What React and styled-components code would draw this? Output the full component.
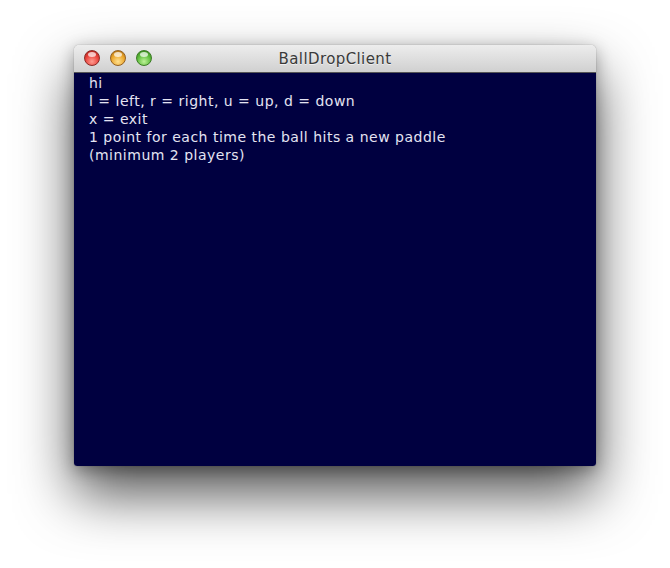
import styled, { createGlobalStyle } from "styled-components";

const GlobalStyle = createGlobalStyle`
    html, body {
        margin: 0;
        padding: 0;
        background: #ffffff;
    }
`

const StyledPage = styled.div`
    width: 670px;
    height: 568px;
    padding: 45px 0 0 74px;
    box-sizing: border-box;
    overflow: hidden;
`
const StyledWindow = styled.div`
    width: 522px;
    height: 421px;
    display: flex;
    flex-direction: column;
    border-radius: 5px 5px 3px 3px;
    overflow: hidden;
    box-shadow: 0 28px 56px rgba(0, 0, 0, 0.68), 0 4px 16px rgba(0, 0, 0, 0.3), 0 0 1px rgba(0, 0, 0, 0.5);
`
const StyledTitleBar = styled.div`
    position: relative;
    height: 28px;
    flex-shrink: 0;
    display: flex;
    align-items: center;
    justify-content: center;
    background: linear-gradient(#ededed, #d0d0d0);
    border-bottom: 1px solid #555;
    box-sizing: border-box;
`
const StyledTitle = styled.span`
    font-family: "DejaVu Sans", "Liberation Sans", sans-serif;
    font-size: 15px;
    letter-spacing: 0.4px;
    color: #3a3a3a;
    text-shadow: 0 1px 0 rgba(255, 255, 255, 0.6);
    margin-top: 1px;
`
const StyledButtons = styled.div`
    position: absolute;
    left: 10px;
    top: 5px;
    display: flex;
    gap: 10px;
`
const StyledDot = styled.span`
    width: 16px;
    height: 16px;
    border-radius: 50%;
    box-sizing: border-box;
    border: 1px solid ${(p) => p.$edge};
    background: radial-gradient(circle at 50% 75%, ${(p) => p.$light} 0%, ${(p) => p.$color} 55%, ${(p) => p.$dark} 100%);
    position: relative;
    &::after {
        content: "";
        position: absolute;
        left: 3px;
        top: 1px;
        width: 8px;
        height: 5px;
        border-radius: 50%;
        background: rgba(255, 255, 255, 0.7);
    }
`
const StyledContent = styled.div`
    flex: 1;
    background: #000040;
    padding: 1px 0 0 15px;
    font-family: "DejaVu Sans", "Liberation Sans", sans-serif;
    font-size: 14px;
    letter-spacing: 0.5px;
    line-height: 18px;
    color: #e4e4f2;
`
const StyledLine = styled.div`
    white-space: pre;
`

const lines = [
    "hi",
    "l = left, r = right, u = up, d = down",
    "x = exit",
    "1 point for each time the ball hits a new paddle",
    "(minimum 2 players)",
]

export default function App() {
    return (
        <>
            <GlobalStyle />
            <StyledPage>
                <StyledWindow>
                    <StyledTitleBar>
                        <StyledButtons>
                            <StyledDot $color="#e8403a" $light="#ff9c90" $dark="#a01810" $edge="#8a2a26" />
                            <StyledDot $color="#eaa52a" $light="#ffe090" $dark="#a06008" $edge="#946020" />
                            <StyledDot $color="#5cbb3a" $light="#bef298" $dark="#2c7212" $edge="#3c7a26" />
                        </StyledButtons>
                        <StyledTitle>BallDropClient</StyledTitle>
                    </StyledTitleBar>
                    <StyledContent>
                        {lines.map((l) => (
                            <StyledLine key={l}>{l}</StyledLine>
                        ))}
                    </StyledContent>
                </StyledWindow>
            </StyledPage>
        </>
    )
}
